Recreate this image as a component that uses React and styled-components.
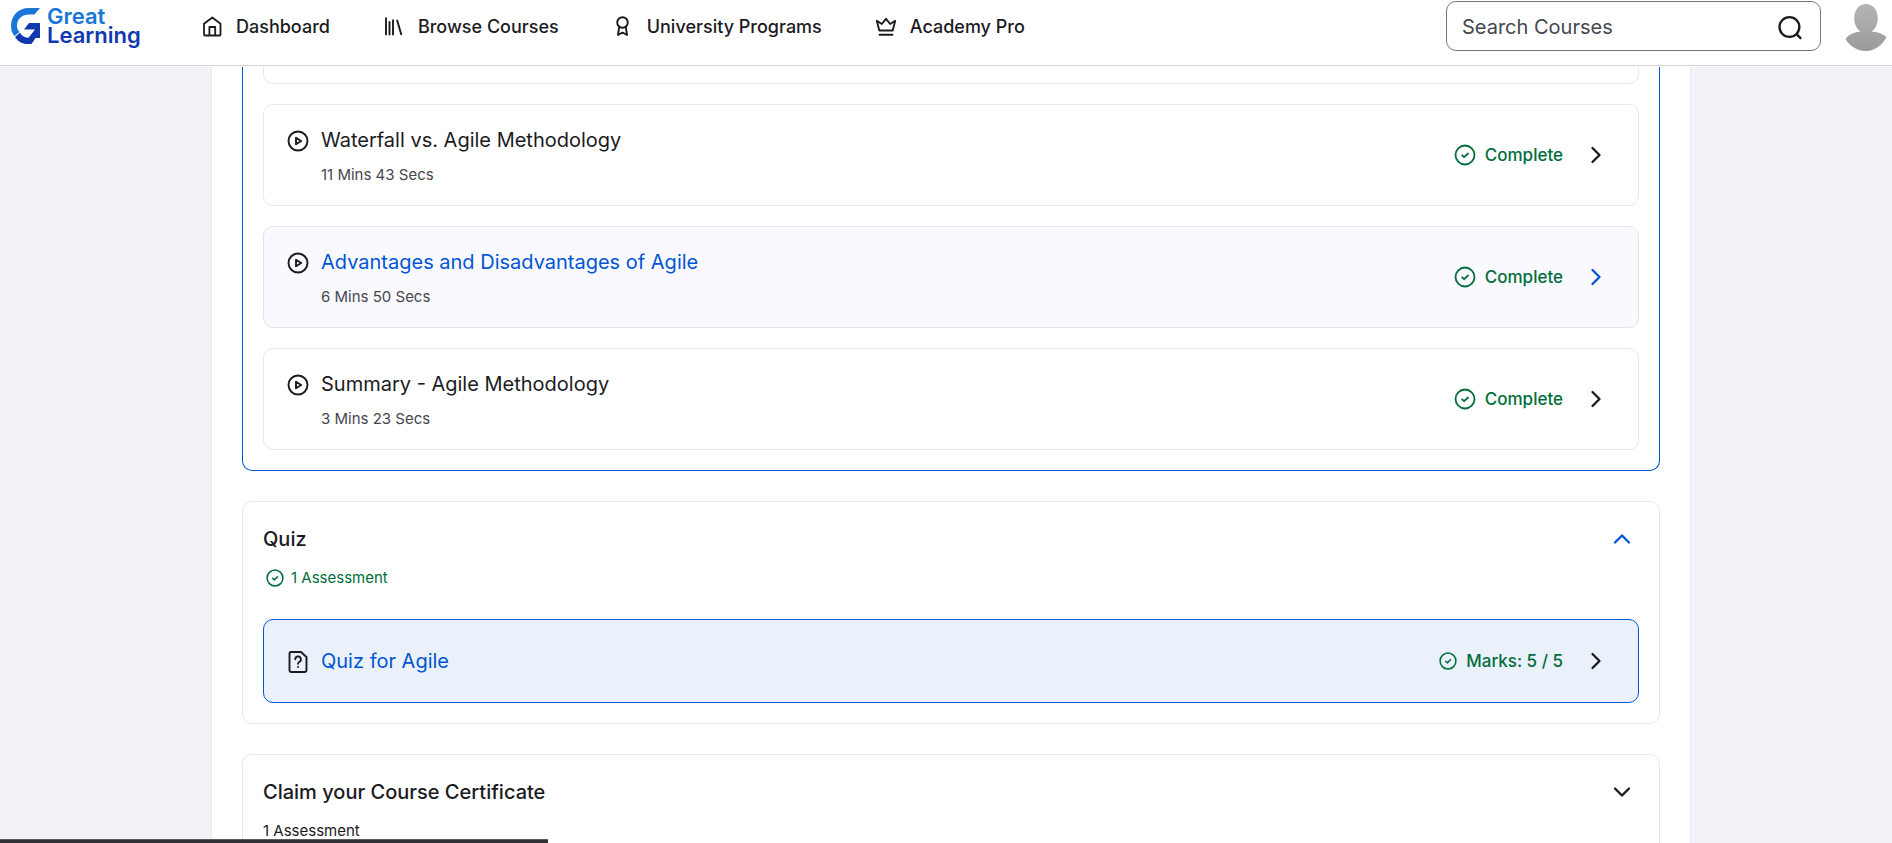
import React from "react";
import styled, { createGlobalStyle, css } from "styled-components";

const c = {
  ink: "#1b1b1f",
  muted: "#46464f",
  blue: "#0056d2",
  green: "#006d3b",
  line: "#e8e8ea",
  page: "#f2f3f8",
};

const GlobalStyle = createGlobalStyle`
  * { box-sizing: border-box; }
  body { margin: 0; background: ${c.page}; color: ${c.ink}; font-family: Inter, "Liberation Sans", sans-serif; }
  h2, h3, p, ul { margin: 0; padding: 0; font-weight: inherit; list-style: none; }
  a { color: inherit; text-decoration: none; }
  svg { display: block; flex: none; }
`;

const Page = styled.div`
  display: flex;
  flex-direction: column;
  height: 100vh;
  overflow: hidden;
`;

const Header = styled.header`
  display: flex;
  align-items: center;
  flex: none;
  padding: 1px 4px 14px 10px;
  background: #fff;
  border-bottom: 1px solid #d5d5d8;
  box-shadow: 0 1px 0 #fff;
  z-index: 1;
`;

const Logo = styled.a`
  display: flex;
  align-items: center;
  gap: 6px;
  width: 190px;
`;

const LogoText = styled.span`
  display: flex;
  flex-direction: column;
  font-size: 22px;
  line-height: 19px;
  font-weight: 600;
  color: #1039b0;
`;

const LogoTop = styled.span`
  color: #1976d8;
`;

const Nav = styled.nav`
  display: flex;
  gap: 52px;
  padding-top: 2px;
`;

const NavLink = styled.a`
  display: flex;
  align-items: center;
  gap: 12px;
  font-size: 18px;
  line-height: 24px;
  font-weight: 500;
`;

const Search = styled.form`
  display: flex;
  align-items: center;
  width: 375px;
  height: 50px;
  margin-left: auto;
  padding: 1px 16px 0 15px;
  border: 1px solid #767680;
  border-radius: 10px;
`;

const SearchInput = styled.input`
  flex: 1;
  min-width: 0;
  border: 0;
  padding: 0;
  outline: 0;
  background: none;
  font: 400 20px/24px Inter, "Liberation Sans", sans-serif;
  color: ${c.ink};
  &::placeholder { color: ${c.muted}; opacity: 1; }
`;

const IconButton = styled.button`
  display: flex;
  padding: 0;
  border: 0;
  background: none;
  color: ${(p) => (p.$active ? c.blue : c.ink)};
  cursor: pointer;
`;

const Avatar = styled.a`
  margin-left: 23px;
  padding-top: 3px;
`;

const Main = styled.main`
  flex: 1;
  min-height: 0;
  overflow: hidden;
  padding-left: 10px;
`;

const Column = styled.div`
  display: flex;
  flex-direction: column;
  gap: 30px;
  max-width: 1480px;
  min-height: 100%;
  margin: 0 auto;
  padding: 0 30px;
  background: #fff;
  border: solid ${c.line};
  border-width: 0 1px;
`;

const Section = styled.section`
  padding: 20px;
  border: 1px solid ${(p) => (p.$active ? c.blue : c.line)};
  border-radius: 10px;
  ${(p) => p.$continued && css`
    padding-top: 0;
    border-top: 0;
    border-top-left-radius: 0;
    border-top-right-radius: 0;
  `}
`;

const SectionHead = styled.div`
  display: flex;
  align-items: center;
  justify-content: space-between;
  padding: 0 5px 0 0;
  height: 34px;
`;

const SectionTitle = styled.h2`
  font-size: 20px;
  line-height: 28px;
  font-weight: 500;
`;

const Summary = styled.p`
  display: flex;
  align-items: center;
  gap: 6px;
  margin-top: 12px;
  padding-left: ${(p) => (p.$done ? "2px" : "0")};
  font-size: 15px;
  line-height: 20px;
  color: ${(p) => (p.$done ? c.green : c.ink)};
`;

const Lessons = styled.ul`
  display: flex;
  flex-direction: column;
  gap: 20px;
`;

const rowTone = {
  plain: css`background: #fff; border-color: ${c.line};`,
  hover: css`background: #faf9ff; border-color: #e3e3e8;`,
  selected: css`background: #eaf1fb; border-color: ${c.blue};`,
};

const Row = styled.a`
  display: flex;
  align-items: center;
  justify-content: space-between;
  min-height: 84px;
  padding: 20px 30px 20px 22px;
  border: 1px solid;
  border-radius: 10px;
  ${(p) => rowTone[p.$tone]}
`;

const RowEnd = styled.div`
  height: 18px;
  border: 1px solid ${c.line};
  border-top: 0;
  border-radius: 0 0 10px 10px;
`;

const RowInfo = styled.div`
  display: flex;
  gap: 11px;
`;

const RowIcon = styled.span`
  padding-top: 4px;
`;

const RowTitle = styled.h3`
  font-size: 20px;
  line-height: 30px;
  color: ${(p) => (p.$link ? c.blue : c.ink)};
`;

const Duration = styled.p`
  margin-top: 10px;
  font-size: 15px;
  line-height: 20px;
  color: ${c.muted};
`;

const Status = styled.span`
  display: flex;
  align-items: center;
  gap: 8px;
  font-size: 17px;
  line-height: 24px;
  font-weight: 500;
  color: ${c.green};
`;

const Arrow = styled.span`
  margin-left: 13px;
  color: ${(p) => (p.$active ? c.blue : c.ink)};
`;

const QuizSpace = styled.div`
  margin-top: 31px;
`;

const StatusBar = styled.div`
  position: fixed;
  left: 0;
  bottom: 0;
  width: 548px;
  height: 4px;
  background: #323236;
  border-top: 1px solid #5c5c5e;
`;

const Icon = ({ size = 24, w = 2, children }) => (
  <svg width={size} height={size} viewBox="0 0 24 24" fill="none" stroke="currentColor" strokeWidth={w} strokeLinecap="round" strokeLinejoin="round" aria-hidden="true">
    {children}
  </svg>
);

const HomeIcon = () => (
  <Icon w={1.8}><path d="M4 19.500V8.800L12.300 2.500l8.200 6.300v10.700a1 1 0 0 1-1 1H5a1 1 0 0 1-1-1zM9.400 20.500V12h5.800v8.500" /></Icon>
);
const BooksIcon = () => (
  <Icon w={1.9}><path d="M4 3.300v16.200M7.500 7v12.500M11 5.300v14.200M15.200 5.500l4 13.800" /></Icon>
);
const AwardIcon = () => (
  <Icon w={1.9}><circle cx="11.500" cy="7.500" r="5.300" /><path d="M8.200 11.800L7 20l4.500-2.500L16 20l-1.200-8.200" /></Icon>
);
const CrownIcon = () => (
  <Icon w={1.9}><path d="M2.800 5.800L5.300 15.500h13.400L21.200 5.800l-5 3.200L12 3.800 7.800 9zM5.500 19.800h13" /></Icon>
);
const PlayIcon = () => (
  <Icon w={1.9}><circle cx="12" cy="12" r="9.500" /><path d="M10 8.800v6.400l5.200-3.200z" /></Icon>
);
const CheckIcon = ({ size }) => (
  <Icon size={size} w={1.8}><circle cx="12" cy="12" r="9.500" /><path d="M9.200 12.300l1.900 1.900 3.900-3.700" /></Icon>
);
const QuizIcon = () => (
  <Icon w={1.9}>
    <path d="M5 2h10l5.500 5v13a2 2 0 0 1-2 2H5a1.500 1.500 0 0 1-1.500-1.500v-17A1.500 1.500 0 0 1 5 2z" />
    <path d="M9.300 9.300a2.800 2.800 0 1 1 4.200 2.400c-1 .600-1.400 1-1.400 2M12.100 17v.100" />
  </Icon>
);
const Chevron = ({ d }) => <Icon w={2.3}><path d={d} /></Icon>;
const RIGHT = "M8.500 5l7 7-7 7";

const LogoMark = () => (
  <svg width="31" height="38" viewBox="0 0 31 38" aria-hidden="true">
    <path d="M30 1H19C8 1 1 9 1 19c0 4 1 7 3.500 10l5-4C7.500 23 7 21 7 19c0-7 5-11.500 12-11.500h5.500z" fill="#1976d8" />
    <path d="M14 22.500l5-6.500h11v15h-4.500l-4 6h-4C12 37 8 34.500 5 30l5-4.300c2 3.300 5 5 8.500 5l6.500-8.200z" fill="#1039b0" />
  </svg>
);

const navItems = [
  ["Dashboard", HomeIcon],
  ["Browse Courses", BooksIcon],
  ["University Programs", AwardIcon],
  ["Academy Pro", CrownIcon],
];

const lessons = [
  { title: "Waterfall vs. Agile Methodology", time: "11 Mins 43 Secs" },
  { title: "Advantages and Disadvantages of Agile", time: "6 Mins 50 Secs", hover: true },
  { title: "Summary - Agile Methodology", time: "3 Mins 23 Secs" },
];

const LessonRow = ({ title, time, hover }) => (
  <Row href="#" $tone={hover ? "hover" : "plain"}>
    <RowInfo>
      <RowIcon><PlayIcon /></RowIcon>
      <div>
        <RowTitle $link={hover}>{title}</RowTitle>
        <Duration>{time}</Duration>
      </div>
    </RowInfo>
    <Status>
      <CheckIcon size={24} />
      Complete
      <Arrow $active={hover}><Chevron d={RIGHT} /></Arrow>
    </Status>
  </Row>
);

export default function App() {
  return (
    <Page>
      <GlobalStyle />
      <Header>
        <Logo href="#" aria-label="Great Learning">
          <LogoMark />
          <LogoText><LogoTop>Great</LogoTop><span>Learning</span></LogoText>
        </Logo>
        <Nav>
          {navItems.map(([label, Glyph]) => (
            <NavLink href="#" key={label}><Glyph />{label}</NavLink>
          ))}
        </Nav>
        <Search onSubmit={(e) => e.preventDefault()}>
          <SearchInput type="text" aria-label="Search Courses" placeholder="Search Courses" />
          <IconButton type="submit" aria-label="Search">
            <Icon size={28}><circle cx="11.500" cy="12" r="8.500" /><path d="M17.800 18.300L21 21.500" /></Icon>
          </IconButton>
        </Search>
        <Avatar href="#" aria-label="Profile">
          <svg width="44" height="47" viewBox="0 0 44 48">
            <defs>
              <linearGradient id="avatar" x1="0" y1="0" x2="0" y2="48" gradientUnits="userSpaceOnUse">
                <stop offset="0" stopColor="#b4b4b4" /><stop offset="1" stopColor="#9b9b9b" />
              </linearGradient>
            </defs>
            <path d="M22 0c7 0 12 6 12 14.500 0 6-2.500 11-6.500 13.500 6 .500 12 2 15.500 6-4.500 8-12 14-21 14S5.500 43 1 36c3-5 9.500-7.500 15.500-8C12.500 25.500 10 20.500 10 14.500 10 6 15 0 22 0z" fill="url(#avatar)" />
          </svg>
        </Avatar>
      </Header>
      <Main>
        <Column>
          <Section $active $continued>
            <Lessons>
              <li><RowEnd /></li>
              {lessons.map((l) => <li key={l.title}><LessonRow {...l} /></li>)}
            </Lessons>
          </Section>
          <Section>
            <SectionHead>
              <SectionTitle>Quiz</SectionTitle>
              <IconButton type="button" $active aria-label="Collapse Quiz"><Chevron d="M5 15.500l7-7 7 7" /></IconButton>
            </SectionHead>
            <Summary $done><CheckIcon size={20} />1 Assessment</Summary>
            <QuizSpace>
              <Row href="#" $tone="selected">
                <RowInfo>
                  <RowIcon><QuizIcon /></RowIcon>
                  <RowTitle $link>Quiz for Agile</RowTitle>
                </RowInfo>
                <Status>
                  <CheckIcon size={20} />
                  Marks: 5 / 5
                  <Arrow><Chevron d={RIGHT} /></Arrow>
                </Status>
              </Row>
            </QuizSpace>
          </Section>
          <Section>
            <SectionHead>
              <SectionTitle>Claim your Course Certificate</SectionTitle>
              <IconButton type="button" aria-label="Expand Claim your Course Certificate"><Chevron d="M5 8.500l7 7 7-7" /></IconButton>
            </SectionHead>
            <Summary>1 Assessment</Summary>
          </Section>
        </Column>
      </Main>
      <StatusBar />
    </Page>
  );
}
